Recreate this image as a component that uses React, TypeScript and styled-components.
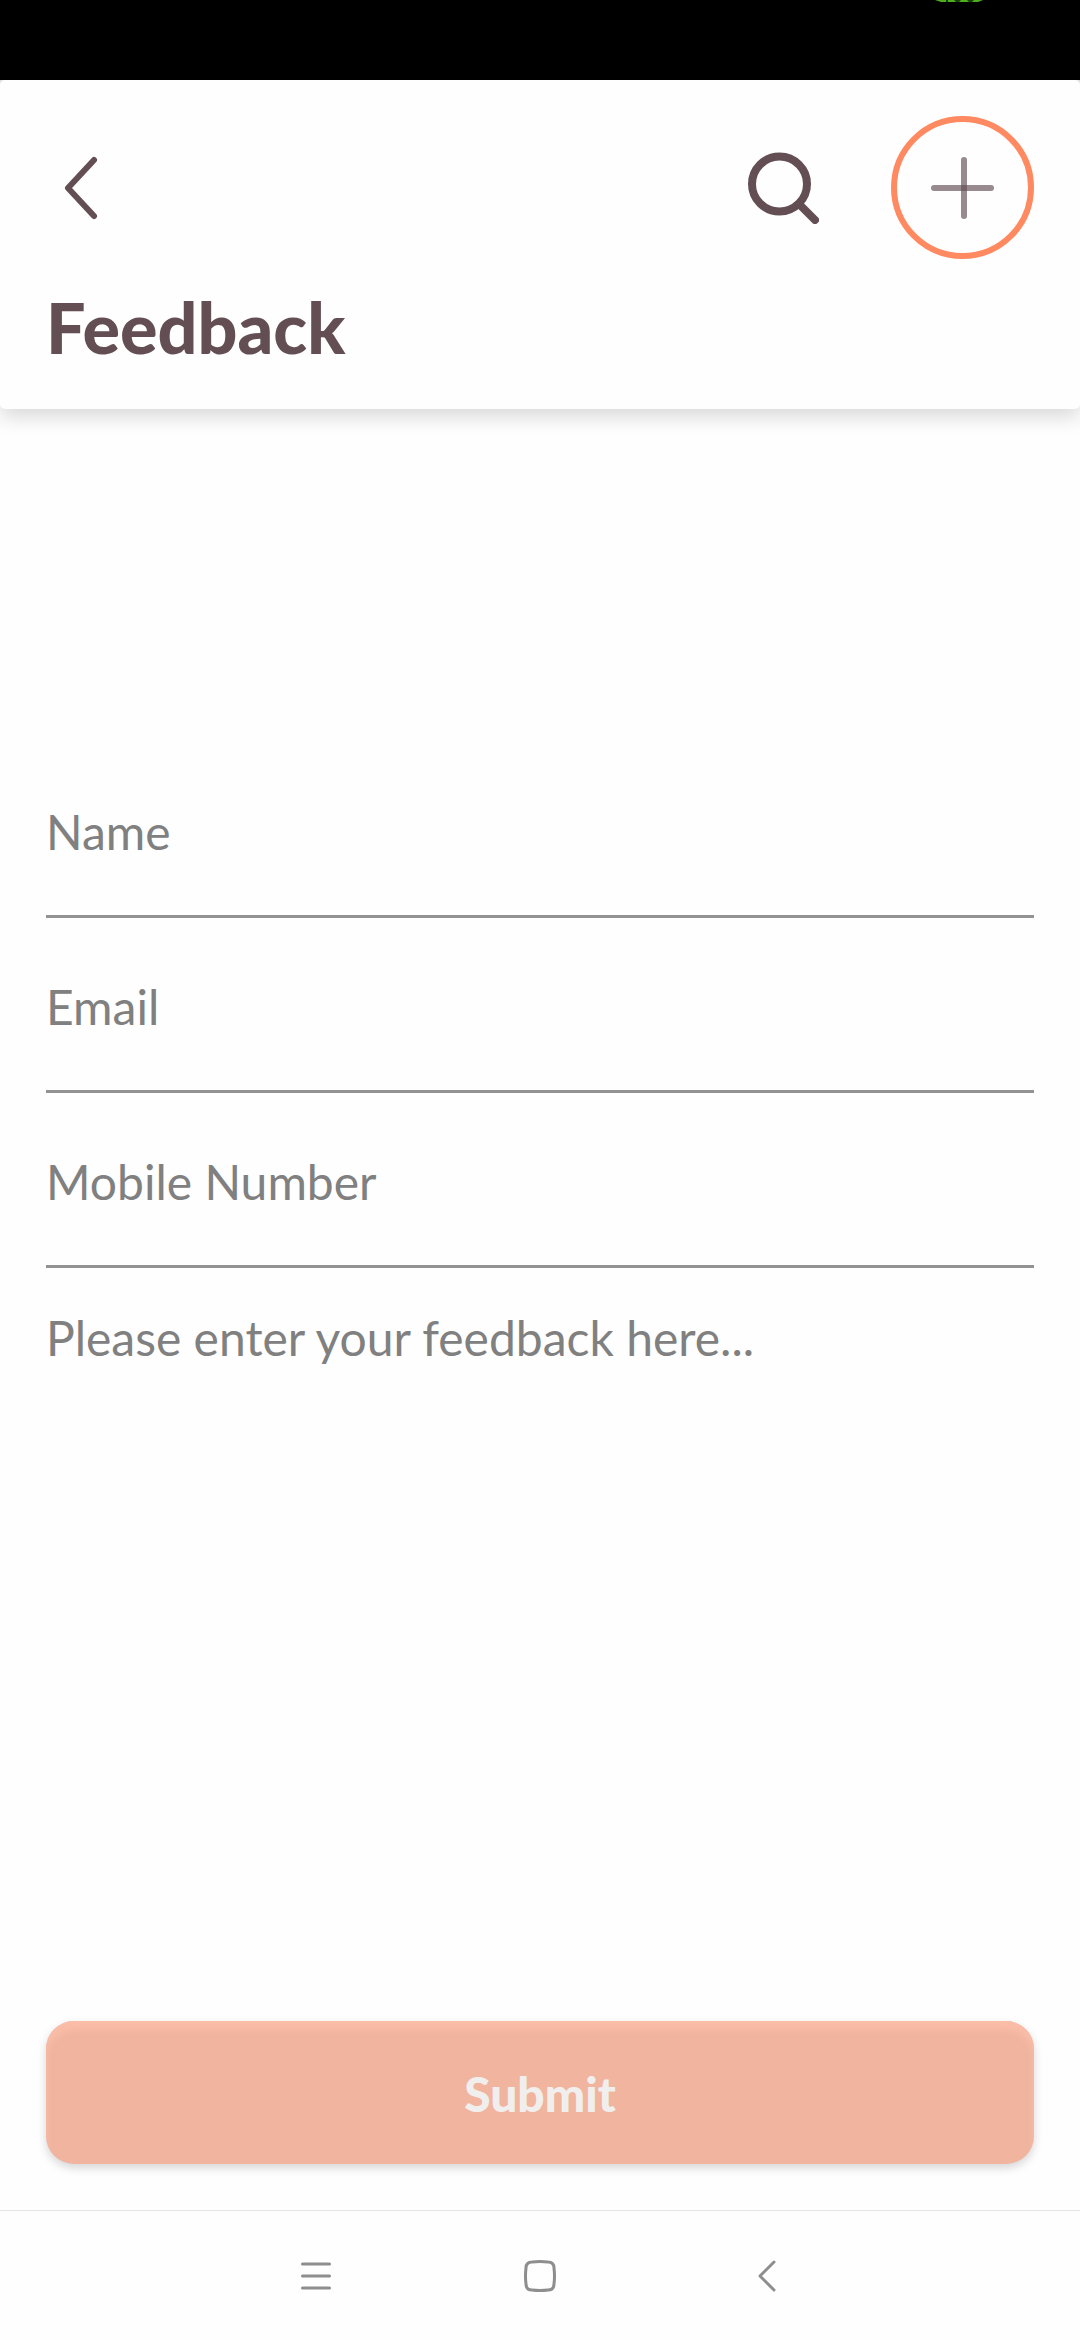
import React from "react";
import styled, { createGlobalStyle } from "styled-components";

const plum = "#634e53";
const grey = "#808080";

const GlobalStyle = createGlobalStyle`
  * { box-sizing: border-box; }
  body { margin: 0; background: #fefefe; font-family: Lato, "Noto Sans", sans-serif; }
  button, input, textarea { font: inherit; margin: 0; padding: 0; border: 0; background: none; border-radius: 0; }
  button { display: flex; align-items: center; justify-content: center; cursor: pointer; }
  svg { display: block; }
`;

const Screen = styled.div`
  display: flex;
  flex-direction: column;
  min-height: 100vh;
`;

const StatusBar = styled.div`
  display: flex;
  justify-content: flex-end;
  height: 80px;
  padding-right: 96px;
  background: #000;
`;

const HeaderArea = styled.div`
  background: linear-gradient(#e4e4e4 0 12px, transparent 12px);
`;

const Header = styled.header`
  padding: 36px 46px 40px;
  border-radius: 5px;
  background: #fefefe;
  box-shadow: 0 8px 20px rgba(0, 0, 0, 0.15);
  clip-path: inset(0 0 -40px 0);
`;

const Toolbar = styled.div`
  display: flex;
  align-items: center;
  justify-content: space-between;
`;

const Actions = styled.div`
  display: flex;
  align-items: center;
  gap: 72px;
`;

const IconButton = styled.button`
  height: 72px;
`;

const AddButton = styled.button`
  width: 143px;
  height: 143px;
  border: 6px solid #ff8a61;
  border-radius: 50%;
`;

const Title = styled.h1`
  margin: 28px 0 2px;
  color: ${plum};
  font-size: 70px;
  font-weight: 900;
  line-height: 80px;
`;

const Form = styled.form`
  display: flex;
  flex: 1;
  flex-direction: column;
  padding: 334px 46px 46px;
`;

const Field = styled.label`
  display: block;
  border-bottom: 3px solid #929292;
`;

const TextInput = styled.input`
  display: block;
  width: 100%;
  height: 172px;
  padding-top: 4px;
  outline: 0;
  color: ${grey};
  font-size: 48px;
  &::placeholder { color: ${grey}; opacity: 1; }
`;

const Message = styled.label`
  display: flex;
  flex: 1;
  margin-bottom: 40px;
`;

const MessageInput = styled.textarea`
  flex: 1;
  padding-top: 42px;
  outline: 0;
  resize: none;
  color: ${grey};
  font-size: 48px;
  line-height: 56px;
  &::placeholder { color: ${grey}; opacity: 1; }
`;

const SubmitButton = styled.button`
  height: 143px;
  padding-top: 2px;
  border-radius: 28px;
  background: #f0b49f;
  box-shadow: inset 0 9px 7px #fabda8, 0 4px 10px rgba(0, 0, 0, 0.16);
  color: #f1efee;
  font-size: 48px;
  font-weight: 900;
`;

const SystemNav = styled.nav`
  display: flex;
  justify-content: center;
  border-top: 1px solid #e3e3e3;
`;

const NavButton = styled.button`
  width: 224px;
  height: 129px;
`;

const fields = [
  { label: "Name", type: "text" },
  { label: "Email", type: "email" },
  { label: "Mobile Number", type: "tel" },
];

export default function App() {
  return (
    <Screen>
      <GlobalStyle />
      <StatusBar>
        <svg width="50" height="3" viewBox="0 0 50 3" aria-hidden="true">
          <path d="M1 0h48l-5 2H7z" fill="#4fae1b" />
          <path d="M12 0h2v2h-2zM20 0h7l-2 2h-3zM33 0h7l-2 2h-3z" fill="#17400a" />
        </svg>
      </StatusBar>

      <HeaderArea>
        <Header>
          <Toolbar>
            <IconButton aria-label="Back">
              <svg width="70" height="72" viewBox="0 0 70 72" fill="none" stroke={plum} strokeWidth="6" strokeLinecap="round" strokeLinejoin="round">
                <path d="M48 8 22 36 48 64" />
              </svg>
            </IconButton>
            <Actions>
              <IconButton aria-label="Search">
                <svg width="72" height="72" viewBox="0 0 72 72" fill="none" stroke={plum} strokeWidth="8" strokeLinecap="round">
                  <circle cx="32.500" cy="32" r="27.500" />
                  <path d="M53 53 68 68" />
                </svg>
              </IconButton>
              <AddButton aria-label="Add">
                <svg width="65" height="64" viewBox="0 0 65 64" fill="none" stroke={plum} strokeOpacity="0.66" strokeWidth="6" strokeLinecap="round">
                  <path d="M4 32h57" />
                  <path d="M34 4v56" />
                </svg>
              </AddButton>
            </Actions>
          </Toolbar>
          <Title>Feedback</Title>
        </Header>
      </HeaderArea>

      <Form onSubmit={(event) => event.preventDefault()}>
        {fields.map(({ label, type }) => (
          <Field key={label}>
            <TextInput type={type} placeholder={label} aria-label={label} />
          </Field>
        ))}
        <Message>
          <MessageInput aria-label="Feedback" placeholder="Please enter your feedback here..." />
        </Message>
        <SubmitButton type="submit">Submit</SubmitButton>
      </Form>

      <SystemNav>
        <NavButton aria-label="Recent apps">
          <svg width="32" height="32" viewBox="0 0 32 32" stroke="#8e8e8e" strokeWidth="3" strokeLinecap="round">
            <path d="M2.500 4h27M2.500 16h27M2.500 28h27" />
          </svg>
        </NavButton>
        <NavButton aria-label="Home">
          <svg width="32" height="32" viewBox="0 0 32 32" fill="none" stroke="#8e8e8e" strokeWidth="3">
            <path d="M8 2Q16 1 24 2Q30 2 30 8Q31 16 30 24Q30 30 24 30Q16 31 8 30Q2 30 2 24Q1 16 2 8Q2 2 8 2Z" />
          </svg>
        </NavButton>
        <NavButton aria-label="System back">
          <svg width="32" height="32" viewBox="0 0 32 32" fill="none" stroke="#8e8e8e" strokeWidth="3" strokeLinecap="round" strokeLinejoin="round">
            <path d="M26 2 12 16 26 30" />
          </svg>
        </NavButton>
      </SystemNav>
    </Screen>
  );
}
